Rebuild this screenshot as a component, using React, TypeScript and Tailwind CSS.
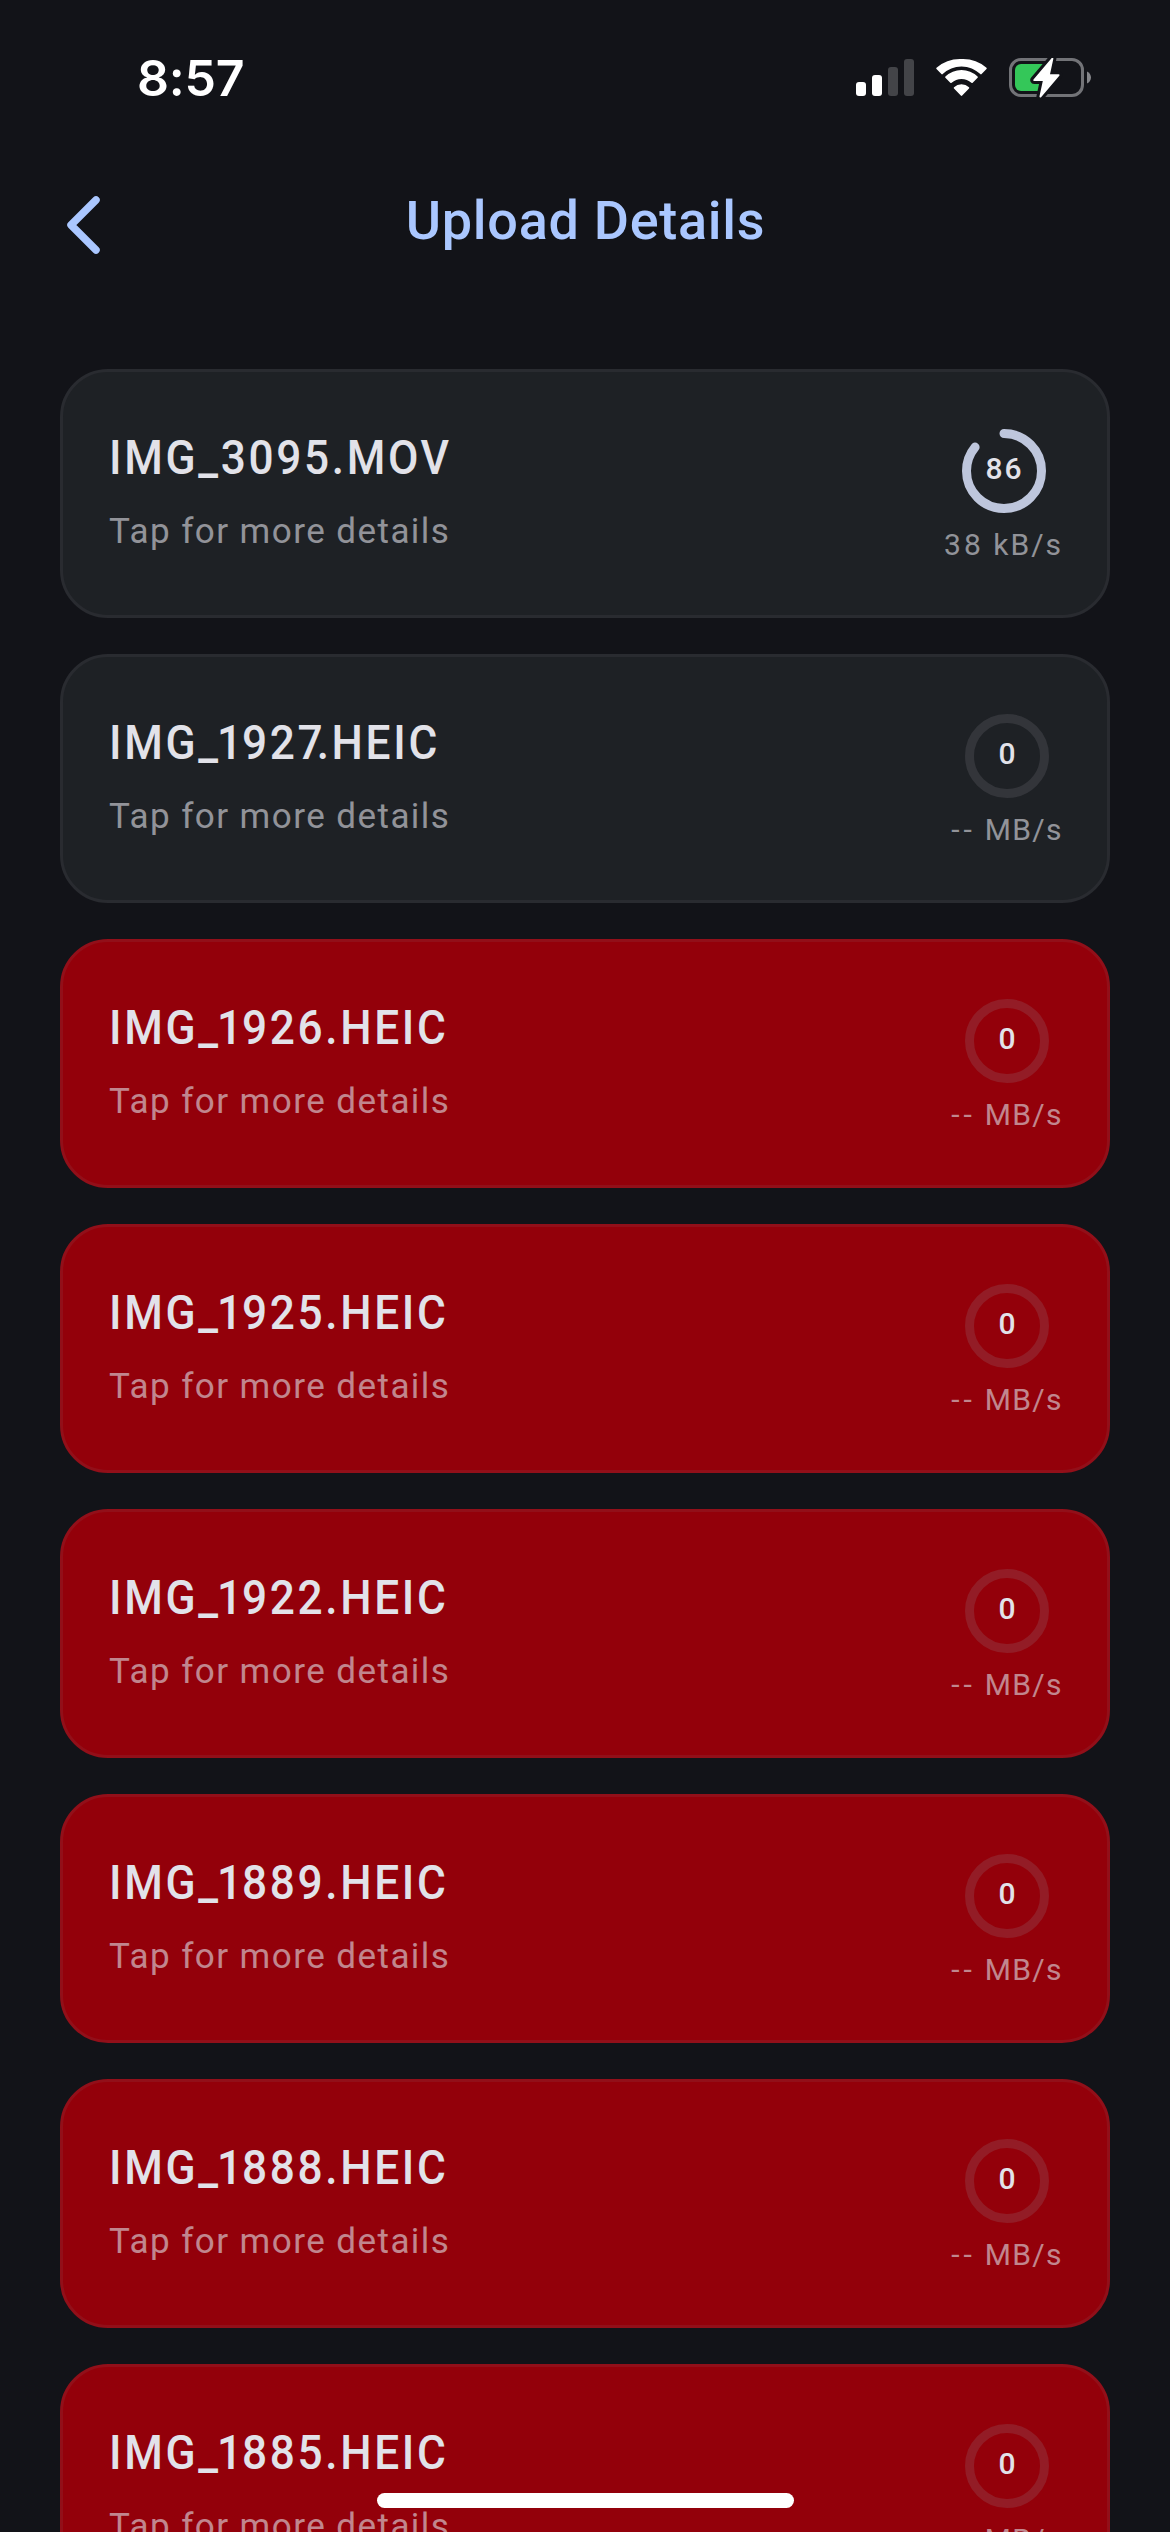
const uploads = [
  { name: 'IMG_3095.MOV', progress: 86, rate: '38', unit: 'kB/s', failed: false },
  { name: 'IMG_1927.HEIC', progress: 0, rate: '--', unit: 'MB/s', failed: false },
  { name: 'IMG_1926.HEIC', progress: 0, rate: '--', unit: 'MB/s', failed: true },
  { name: 'IMG_1925.HEIC', progress: 0, rate: '--', unit: 'MB/s', failed: true },
  { name: 'IMG_1922.HEIC', progress: 0, rate: '--', unit: 'MB/s', failed: true },
  { name: 'IMG_1889.HEIC', progress: 0, rate: '--', unit: 'MB/s', failed: true },
  { name: 'IMG_1888.HEIC', progress: 0, rate: '--', unit: 'MB/s', failed: true },
  { name: 'IMG_1885.HEIC', progress: 0, rate: '--', unit: 'MB/s', failed: true },
]

type Upload = (typeof uploads)[number]

const kerning: Record<string, string> = {
  _: 'tracking-[-1.1px]',
  '1': 'tracking-[-0.1px]',
  '7': 'tracking-[-6.5px]',
}

function StatusBar() {
  return (
    <div className="flex h-[156px] justify-between pt-[48px] pr-[78px] pl-[137px]">
      <span className="h-[60px] font-['Inter'] text-[50px] leading-[60px] font-semibold tracking-[-0.2px] text-white">
        8:57
      </span>
      <svg width="236" height="40" viewBox="856 58 236 40" className="mt-[10px]">
        {/* Signal */}
        <g fill="#fff">
          <rect x="856" y="82" width="10" height="14" rx="3" />
          <rect x="872" y="75" width="10" height="21" rx="3" />
          <rect x="888" y="67" width="10" height="29" rx="3" fill="#434448" />
          <rect x="904" y="59" width="10" height="37" rx="3" fill="#434448" />
        </g>
        {/* Wifi */}
        <g fill="#fff">
          <path d="M961.5 66.5c7.3 0 13.900 2.900 18.800 7.600.4.400.9.400 1.300 0l4.900-5c.4-.4.4-1 0-1.400A36 36 0 0 0 961.500 59a36 36 0 0 0-25 8.700c-.4.400-.4 1 0 1.400l4.900 5c.4.400.9.400 1.300 0a27 27 0 0 1 18.800-7.600z" />
          <path d="M961.500 79c3.700 0 7.200 1.400 9.900 3.800.4.400.9.400 1.300 0l4.900-5c.4-.4.4-1 0-1.400a23.500 23.500 0 0 0-32.200 0c-.4.400-.4 1 0 1.400l4.900 5c.4.400.9.400 1.300 0a14.800 14.800 0 0 1 9.900-3.800z" />
          <path d="M969 88.600c.4-.4.4-1 0-1.400a11.300 11.300 0 0 0-15 0c-.4.400-.4 1 0 1.400l6.800 7c.4.400 1 .4 1.400 0z" />
        </g>
        {/* Battery */}
        <rect x="1010.500" y="59.500" width="72" height="36" rx="10.500" fill="none" stroke="#727377" strokeWidth="3" />
        <path d="M1087 71.500c2.500 1 4 3.500 4 6s-1.500 5-4 6z" fill="#85868a" />
        <path d="M1021 64h22l-2 27h-20a6 6 0 0 1-6-6V70a6 6 0 0 1 6-6z" fill="#34c759" />
        <path
          d="M1051.500 58.200l-18 21.200c-.6.800-.2 1.600.7 1.600h8.600l-3.300 15.200c-.3 1.300.9 1.900 1.800.8l18-21.200c.6-.8.2-1.600-.7-1.600h-8.600l3.300-15.200c.3-1.300-.9-1.900-1.800-.8z"
          fill="#fff"
          stroke="#121318"
          strokeWidth="6"
          paintOrder="stroke"
        />
      </svg>
    </div>
  )
}

function Header() {
  return (
    <header className="grid h-[213px] grid-cols-[200px_1fr_200px]">
      <svg width="40" height="64" viewBox="0 0 40 64" className="mt-[37px] ml-[63px]">
        <path d="M33 7L8 32l25 25" fill="none" stroke="#aac7ff" strokeWidth="7.500" strokeLinecap="round" strokeLinejoin="round" />
      </svg>
      <h1 className="mt-[33px] pl-px text-center text-[54px] leading-[64px] font-medium tracking-[0.7px] text-[#aac7ff]">
        Upload Details
      </h1>
    </header>
  )
}

function Ring({ progress, failed }: { progress: number; failed: boolean }) {
  return (
    <div className="grid size-[84px] place-items-center">
      <svg width="84" height="84" viewBox="0 0 84 84" className="col-start-1 row-start-1">
        {progress === 0 ? (
          <circle cx="42" cy="42" r="37.500" fill="none" stroke={failed ? '#931c26' : '#33353a'} strokeWidth="9" />
        ) : (
          <circle
            cx="42"
            cy="42"
            r="37.500"
            fill="none"
            stroke="#bec6dc"
            strokeWidth="9"
            strokeLinecap="round"
            pathLength="100"
            strokeDasharray={`${progress} 100`}
            transform="rotate(-90 42 42)"
          />
        )}
      </svg>
      <span className="col-start-1 row-start-1 mb-[5px] pl-[2px] text-[30px] leading-[36px] font-medium tracking-[2px] text-[#e2e2e9]">
        {progress}
      </span>
    </div>
  )
}

function UploadCard({ upload }: { upload: Upload }) {
  return (
    <div
      className={`flex h-[249px] shrink-0 justify-between rounded-[48px] border-[3px] pr-[44px] pl-[46px] ${
        upload.failed ? 'border-[#920f19] bg-[#93000a]' : 'border-[#292b30] bg-[#1e2125]'
      }`}
    >
      <div className="pt-[58px] whitespace-nowrap">
        <h2 className="origin-left scale-x-[0.92] text-[48px] leading-[56px] font-medium tracking-[2.9px] text-[#e2e2e9]">
          {upload.name.split(/(_(?=1)|1|7)/).map((part, i) => (
            <span key={i} className={kerning[part]}>
              {part}
            </span>
          ))}
        </h2>
        <p className="mt-[25px] text-[35px] leading-[42px] tracking-[1.45px] text-[#e2e2e9]/60">Tap for more details</p>
      </div>
      <div className="flex flex-col items-center pt-[57px] whitespace-nowrap">
        <Ring progress={upload.progress} failed={upload.failed} />
        <p className="mt-[14px] text-[30px] leading-[36px] text-[#e2e2e9]/60">
          <span className={upload.rate === '--' ? 'tracking-[4px]' : 'tracking-[3px]'}>{upload.rate}</span>
          <span className={upload.rate === '--' ? 'tracking-[1.4px]' : 'tracking-[2px]'}> {upload.unit}</span>
        </p>
      </div>
    </div>
  )
}

export default function App() {
  return (
    <div className="relative h-[2532px] w-[1170px] overflow-hidden bg-[#121318] font-['Roboto',sans-serif]">
      <StatusBar />
      <Header />
      <main className="flex flex-col gap-[36px] px-[60px]">
        {uploads.map((u) => (
          <UploadCard key={u.name} upload={u} />
        ))}
      </main>
      {/* Home indicator */}
      <div className="absolute bottom-[24px] left-[377px] h-[15px] w-[417px] rounded-full bg-white" />
    </div>
  )
}
